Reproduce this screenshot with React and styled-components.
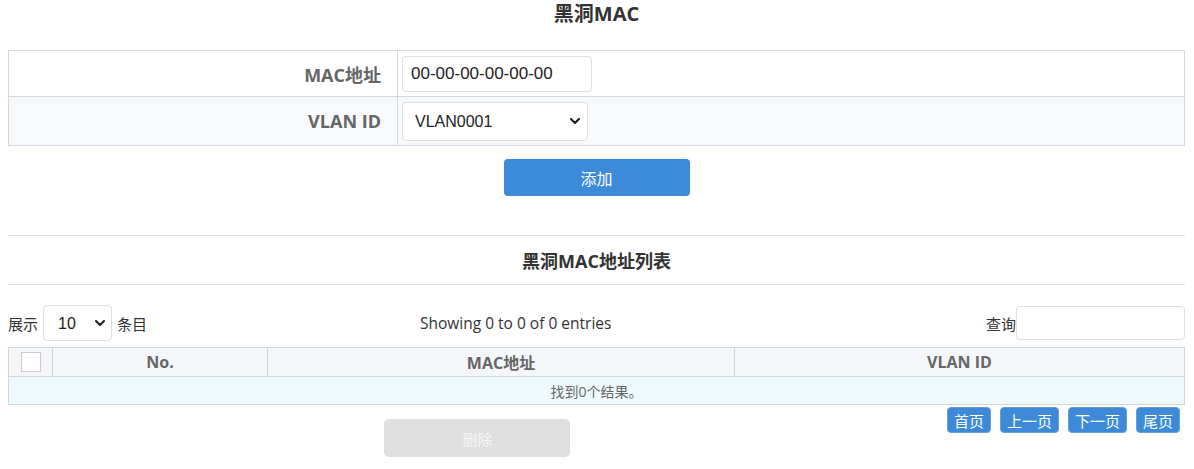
import React from 'react'
import styled, {createGlobalStyle} from 'styled-components'
import {ChevronDown} from 'lucide-react'

const GlobalStyle = createGlobalStyle`
    body {
        margin: 0 9px 0 8px;
        background: #fff;
        font-family: "Open Sans", "Noto Sans CJK SC", sans-serif;
        color: #333;
    }
`;

const Page = styled.div`
    display: flex;
    flex-direction: column;
`;

const Title = styled.h2`
    margin: 0;
    font-size: 20px;
    line-height: 28px;
    font-weight: 700;
    text-align: center;
    color: #333;
`;

const FormTable = styled.div`
    margin-top: 22px;
    border: 1px solid #d3d9e3;
`;

const FormRow = styled.div`
    display: grid;
    grid-template-columns: 389px 1fr;
    height: ${props => props.h}px;
    background: ${props => props.shade ? '#f8f9fa' : '#fff'};
    border-top: ${props => props.first ? 'none' : '1px solid #d3d9e3'};
`;

const Label = styled.div`
    display: flex;
    align-items: center;
    justify-content: flex-end;
    padding-right: 16px;
    border-right: 1px solid #d3d9e3;
    font-size: 18px;
    font-weight: 700;
    color: #666;
`;

const Field = styled.div`
    display: flex;
    align-items: center;
    padding-left: 4px;
`;

const TextInput = styled.input`
    box-sizing: border-box;
    width: ${props => props.w}px;
    height: ${props => props.h}px;
    border: 1px solid #dcdfe4;
    border-radius: 4px;
    padding: 0 8px;
    font-family: "Liberation Sans", Arial, sans-serif;
    font-size: 17px;
    color: #222;
    background: #fff;
    outline: none;
`;

const SelectWrap = styled.div`
    position: relative;
    display: inline-flex;
`;

const Select = styled.select`
    box-sizing: border-box;
    appearance: none;
    width: ${props => props.w}px;
    height: ${props => props.h}px;
    border: 1px solid #dcdfe4;
    border-radius: 4px;
    padding: 0 0 0 ${props => props.pad}px;
    font-family: "Liberation Sans", Arial, sans-serif;
    font-size: 16px;
    color: #222;
    background: #fff;
    outline: none;
`;

const Arrow = styled.span`
    position: absolute;
    right: ${props => props.r}px;
    top: 50%;
    transform: translateY(-50%);
    display: flex;
    pointer-events: none;
    color: #222;
`;

const AddButton = styled.button`
    align-self: center;
    margin-top: 13px;
    width: 186px;
    height: 37px;
    border: none;
    border-radius: 4px;
    background: #3d8bd8;
    color: #fff;
    font-family: "Noto Sans CJK SC", sans-serif;
    font-size: 16px;
`;

const Divider = styled.hr`
    margin: ${props => props.top}px 0 0;
    border: none;
    border-top: 1px solid #dedede;
`;

const SubTitle = styled.h3`
    margin: 0;
    height: 48px;
    display: flex;
    align-items: center;
    justify-content: center;
    font-size: 18px;
    font-weight: 700;
    color: #333;
`;

const Controls = styled.div`
    margin-top: 20px;
    display: flex;
    align-items: center;
    height: 36px;
    font-size: 15px;
    color: #333;
`;

const LengthBox = styled.div`
    display: flex;
    align-items: center;
    gap: 5px;
    width: 412px;
`;

const Info = styled.div`
    font-size: 15.5px;
`;

const SearchBox = styled.div`
    margin-left: auto;
    display: flex;
    align-items: center;
`;

const Table = styled.table`
    margin-top: 6px;
    width: 100%;
    border-collapse: collapse;
    border: 1px solid #cfd6e0;
    table-layout: fixed;
`;

const Th = styled.th`
    width: ${props => props.w ? props.w + 'px' : 'auto'};
    height: 28px;
    padding: 0;
    background: #f4f6fa;
    border: 1px solid #cfd6e0;
    font-size: 16px;
    font-weight: 700;
    color: #666;
    text-align: center;
`;

const Check = styled.span`
    display: block;
    margin: 0 auto;
    width: 18px;
    height: 18px;
    border: 1px solid #c9ccd1;
    background: #fff;
`;

const EmptyCell = styled.td`
    height: 27px;
    padding: 0;
    background: #effafd;
    text-align: center;
    font-size: 14px;
    color: #666;
`;

const Bottom = styled.div`
    display: flex;
    align-items: flex-start;
`;

const DeleteArea = styled.div`
    flex: 1;
    display: flex;
    justify-content: center;
`;

const DeleteButton = styled.button`
    margin-top: 14px;
    width: 186px;
    height: 38px;
    border: none;
    border-radius: 5px;
    background: #dfdfdf;
    color: #f6f6f6;
    font-family: "Noto Sans CJK SC", sans-serif;
    font-size: 15px;
`;

const Pager = styled.div`
    display: flex;
    gap: 9px;
    margin-top: 2px;
    padding-right: 5px;
`;

const PageButton = styled.button`
    height: 26px;
    padding: 0 6px;
    border: 1px solid #6a9fd6;
    border-radius: 4px;
    background: #3d8bd8;
    color: #fff;
    font-family: "Noto Sans CJK SC", sans-serif;
    font-size: 15px;
    line-height: 1;
`;

const App = () => {
  return (
    <Page>
        <GlobalStyle/>
        <Title>黑洞MAC</Title>
        <FormTable>
            <FormRow first h={45}>
                <Label>MAC地址</Label>
                <Field>
                    <TextInput w={190} h={36} defaultValue="00-00-00-00-00-00"/>
                </Field>
            </FormRow>
            <FormRow shade h={48}>
                <Label>VLAN ID</Label>
                <Field>
                    <SelectWrap>
                        <Select w={186} h={39} pad={12}>
                            <option>VLAN0001</option>
                        </Select>
                        <Arrow r={5}><ChevronDown size={16} strokeWidth={3.2}/></Arrow>
                    </SelectWrap>
                </Field>
            </FormRow>
        </FormTable>
        <AddButton>添加</AddButton>

        <Divider top={39}/>
        <SubTitle>黑洞MAC地址列表</SubTitle>
        <Divider top={0}/>

        <Controls>
            <LengthBox>
                展示
                <SelectWrap>
                    <Select w={69} h={36} pad={14}>
                        <option>10</option>
                    </Select>
                    <Arrow r={4}><ChevronDown size={16} strokeWidth={3.2}/></Arrow>
                </SelectWrap>
                条目
            </LengthBox>
            <Info>Showing 0 to 0 of 0 entries</Info>
            <SearchBox>
                查询
                <TextInput w={169} h={34}/>
            </SearchBox>
        </Controls>

        <Table>
            <thead>
                <tr>
                    <Th w={43}><Check/></Th>
                    <Th w={214}>No.</Th>
                    <Th w={466}>MAC地址</Th>
                    <Th>VLAN ID</Th>
                </tr>
            </thead>
            <tbody>
                <tr>
                    <EmptyCell colSpan={4}>找到0个结果。</EmptyCell>
                </tr>
            </tbody>
        </Table>

        <Bottom>
            <DeleteArea>
                <DeleteButton disabled>删除</DeleteButton>
            </DeleteArea>
            <Pager>
                <PageButton>首页</PageButton>
                <PageButton>上一页</PageButton>
                <PageButton>下一页</PageButton>
                <PageButton>尾页</PageButton>
            </Pager>
        </Bottom>
    </Page>
  )
}

export default App
